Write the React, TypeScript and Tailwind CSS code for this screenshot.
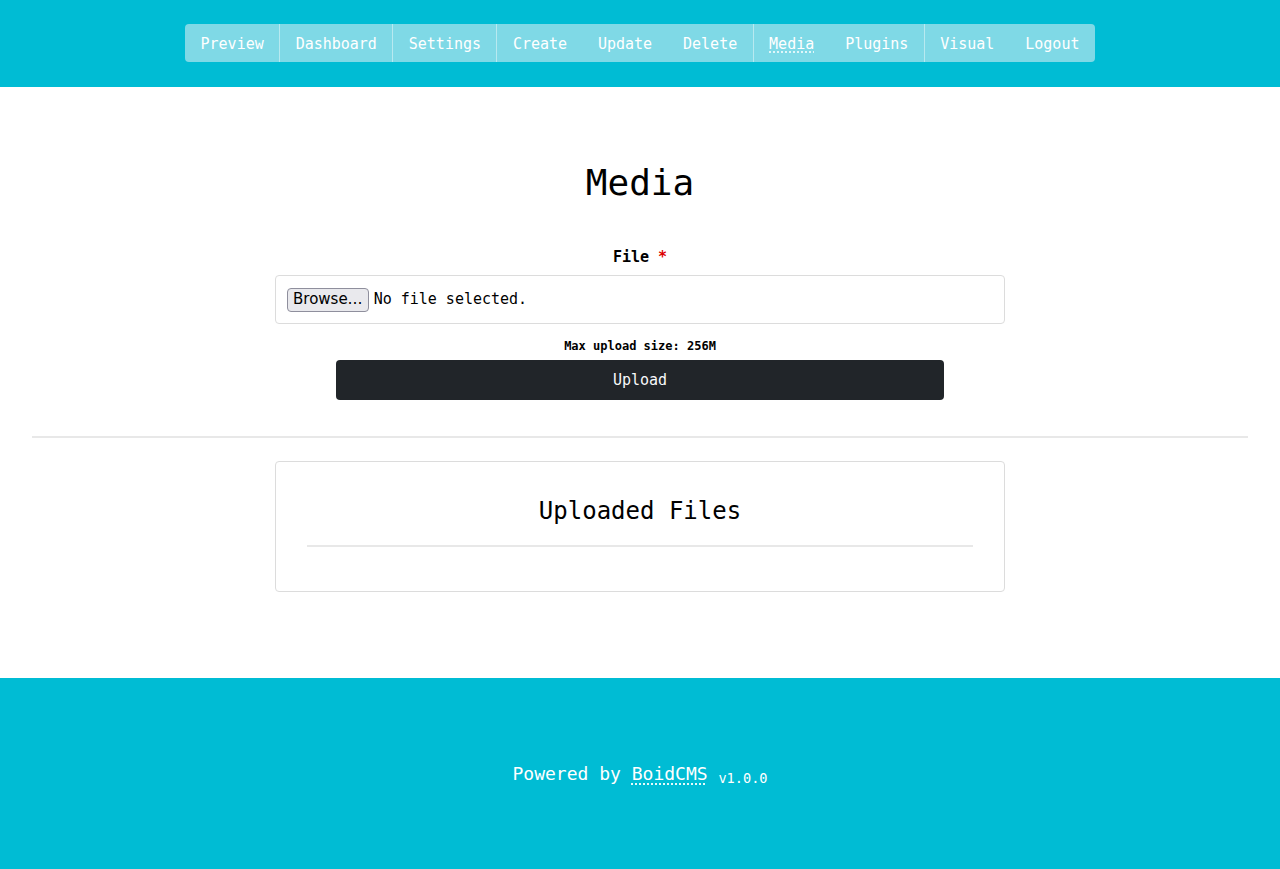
import React from 'react';

const NAV_GROUPS = [
  ['Preview'],
  ['Dashboard'],
  ['Settings'],
  ['Create', 'Update', 'Delete'],
  ['Media', 'Plugins'],
  ['Visual', 'Logout'],
];

const mono = "font-['DejaVu_Sans_Mono',monospace]";

function Nav() {
  return (
    <nav className="flex h-[38px] rounded-[4px] bg-[#7fd9e6] text-[15px] text-white">
      {NAV_GROUPS.map((group, gi) => (
        <div
          key={gi}
          className={gi < NAV_GROUPS.length - 1 ? 'flex border-r border-[#b8e9f0]' : 'flex'}
        >
          {group.map((item) => (
            <a
              key={item}
              href="#"
              className={
                item === 'Media'
                  ? 'px-[15.45px] pt-[2px] leading-[36px] underline decoration-dotted underline-offset-[3px]'
                  : 'px-[15.45px] pt-[2px] leading-[36px]'
              }
            >
              {item}
            </a>
          ))}
        </div>
      ))}
    </nav>
  );
}

export default function App() {
  return (
    <div className={`${mono} min-h-screen bg-white text-black`}>
      {/* Header */}
      <header className="flex h-[87px] justify-center bg-[#00bcd4] pt-[24px]">
        <div className="h-[38px]">
          <Nav />
        </div>
      </header>

      {/* Main */}
      <main className="px-[32px] pb-[86px]">
        <h1 className="mt-[74px] text-center text-[36px] leading-[43px]">Media</h1>

        <form className="mx-auto mt-[41px] flex w-[730px] flex-col items-center">
          <label className="text-[15px] font-bold leading-[24px]">
            File <span className="text-[#d00]">*</span>
          </label>
          <div className="mt-[6px] flex h-[49px] w-full items-center rounded-[4px] border border-[#dcdcdc] px-[11px]">
            <span className="flex h-[24px] items-center rounded-[4px] border border-[#8f8f9d] bg-[#e9e9ed] px-[5px] font-['DejaVu_Sans',sans-serif] text-[15px] text-black">
              Browse…
            </span>
            <span className="ml-[5px] text-[15px]">No file selected.</span>
          </div>
          <p className="mt-[13px] text-[12px] font-bold leading-[18px]">Max upload size: 256M</p>
          <button
            type="button"
            className="mt-[5px] h-[40px] w-[608px] rounded-[4px] bg-[#212529] text-[15px] text-[#f8f9fa]"
          >
            Upload
          </button>
        </form>

        <hr className="mt-[36px] border-t-2 border-[#e8e8e8]" />

        <section className="mx-auto mt-[23px] w-[730px] rounded-[4px] border border-[#dcdcdc] px-[31px] pb-[44px] pt-[33px]">
          <h2 className="text-center text-[24px] leading-[32px]">Uploaded Files</h2>
          <hr className="mt-[18px] border-t-2 border-[#e8e8e8]" />
        </section>
      </main>

      {/* Footer */}
      <footer className="flex h-[191px] items-center justify-center bg-[#00bcd4] pt-[1px] text-white">
        <p className="text-[18px]">
          Powered by{' '}
          <a href="#" className="underline decoration-dotted underline-offset-[4px]">
            BoidCMS
          </a>{' '}
          <small className="align-[-3px] text-[13.6px]">v1.0.0</small>
        </p>
      </footer>
    </div>
  );
}
